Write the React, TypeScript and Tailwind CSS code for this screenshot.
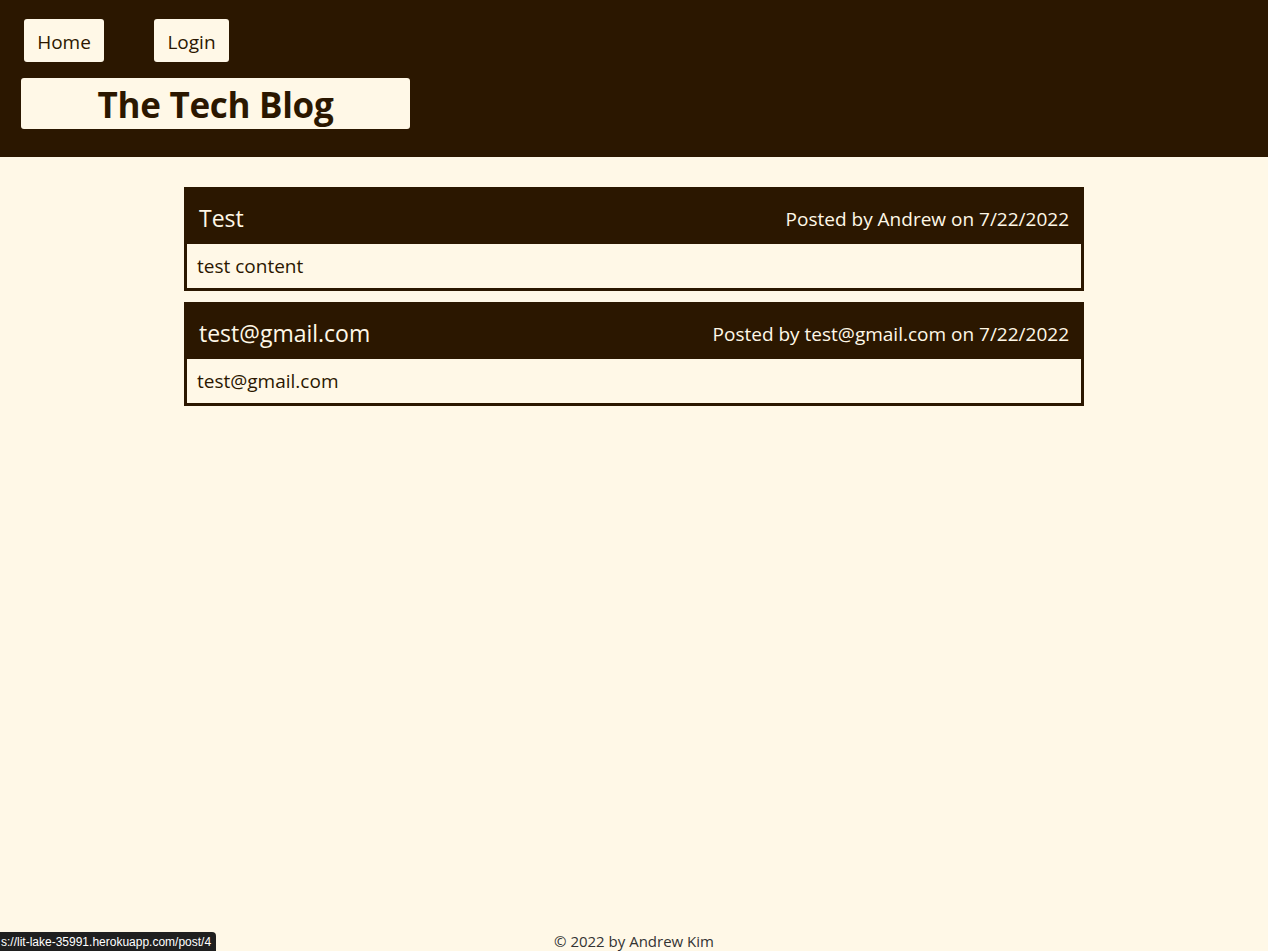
import React from 'react';

type Post = { id: number; title: string; author: string; date: string; content: string };

const posts: Post[] = [
  { id: 4, title: 'Test', author: 'Andrew', date: '7/22/2022', content: 'test content' },
  { id: 5, title: 'test@gmail.com', author: 'test@gmail.com', date: '7/22/2022', content: 'test@gmail.com' },
];

const font = { fontFamily: '"Open Sans", "Noto Sans", sans-serif' };

const App: React.FC = () => {
  return (
    <div className="min-h-screen flex flex-col bg-[#fff8e7] text-[#2b1700] relative" style={font}>
      <header className="bg-[#2b1700] h-[157px] pl-[21px] pt-[19px]">
        <nav className="flex gap-[50px] pl-[3px]">
          <a className="bg-[#fff8e7] rounded-[3px] h-[43px] w-[80px] flex items-center justify-center pt-[3px] text-[19px] text-[#2b1700]">
            Home
          </a>
          <a className="bg-[#fff8e7] rounded-[3px] h-[43px] w-[75px] flex items-center justify-center pt-[3px] text-[19px] text-[#2b1700]">
            Login
          </a>
        </nav>
        <div className="mt-[16px] bg-[#fff8e7] rounded-[3px] w-[389px] h-[51px] flex items-center justify-center pt-[2px]">
          <h1 className="text-[35px] font-bold leading-none tracking-[-0.3px]">The Tech Blog</h1>
        </div>
      </header>

      <main className="flex-1 flex flex-col items-center pt-[30px] gap-[11px]">
        {posts.map((post) => (
          <article key={post.id} className="w-[900px] border-[3px] border-[#2b1700]">
            <div className="bg-[#2b1700] text-[#fff8e7] h-[54px] flex items-end justify-between px-[12px] pb-[14px]">
              <h2 className="text-[23px] leading-none">{post.title}</h2>
              <p className="text-[19px] leading-none pb-[1px]">
                Posted by {post.author} on {post.date}
              </p>
            </div>
            <div className="h-[44px] flex items-center px-[10px] text-[19px]">{post.content}</div>
          </article>
        ))}
      </main>

      <footer className="h-[20px] flex items-center justify-center text-[15px] text-[#333]">
        © 2022 by Andrew Kim
      </footer>

      <div
        className="absolute left-0 bottom-0 h-[19px] pl-[1px] pr-[5px] bg-[#1f1f1f] text-white text-[12px] flex items-center rounded-tr-[4px]"
        style={{ fontFamily: '"Liberation Sans Narrow", "Liberation Sans", sans-serif' }}
      >
        s://lit-lake-35991.herokuapp.com/post/4
      </div>
    </div>
  );
};

export default App;
